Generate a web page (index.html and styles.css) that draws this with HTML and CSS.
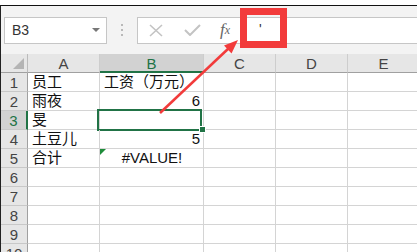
FILE: index.html
```html
<!DOCTYPE html>
<html lang="zh-CN">
<head>
    <meta charset="UTF-8">
    <title>工资表</title>
    <link rel="stylesheet" href="styles.css">
</head>
<body>
    <div class="app">
        <!-- Formula bar -->
        <div class="toolbar">
            <div class="namebox">
                <span>B3</span>
                <span class="caret"></span>
            </div>
            <div class="grip"><i></i><i></i><i></i></div>
            <div class="formula">
                <div class="fbtn">
                    <svg width="14" height="13" viewBox="0 0 14 13"><path d="M1 1 L13 12 M13 1 L1 12" stroke="#c3c3c3" stroke-width="1.6" fill="none"/></svg>
                </div>
                <div class="fbtn">
                    <svg width="17" height="12" viewBox="0 0 17 12"><path d="M1 6 L6 11 L16 1" stroke="#c3c3c3" stroke-width="2" fill="none"/></svg>
                </div>
                <div class="fbtn fx">f<sub>x</sub></div>
                <div class="input">'</div>
            </div>
        </div>

        <!-- Sheet grid -->
        <div class="sheet">
            <div class="hd corner"><span class="tri"></span></div>
            <div class="hd col">A</div>
            <div class="hd col active-col">B</div>
            <div class="hd col">C</div>
            <div class="hd col">D</div>
            <div class="hd col">E</div>

            <div class="hd row">1</div>
            <div class="cell">员工</div>
            <div class="cell">工资（万元）</div>
            <div class="cell"></div><div class="cell"></div><div class="cell"></div>

            <div class="hd row">2</div>
            <div class="cell">雨夜</div>
            <div class="cell num">6</div>
            <div class="cell"></div><div class="cell"></div><div class="cell"></div>

            <div class="hd row active-row">3</div>
            <div class="cell">旻</div>
            <div class="cell selected"><span class="handle"></span></div>
            <div class="cell"></div><div class="cell"></div><div class="cell"></div>

            <div class="hd row">4</div>
            <div class="cell">土豆儿</div>
            <div class="cell num">5</div>
            <div class="cell"></div><div class="cell"></div><div class="cell"></div>

            <div class="hd row">5</div>
            <div class="cell">合计</div>
            <div class="cell err">#VALUE!</div>
            <div class="cell"></div><div class="cell"></div><div class="cell"></div>

            <div class="hd row">6</div>
            <div class="cell"></div><div class="cell"></div><div class="cell"></div><div class="cell"></div><div class="cell"></div>
            <div class="hd row">7</div>
            <div class="cell"></div><div class="cell"></div><div class="cell"></div><div class="cell"></div><div class="cell"></div>
            <div class="hd row">8</div>
            <div class="cell"></div><div class="cell"></div><div class="cell"></div><div class="cell"></div><div class="cell"></div>
            <div class="hd row">9</div>
            <div class="cell"></div><div class="cell"></div><div class="cell"></div><div class="cell"></div><div class="cell"></div>
            <div class="hd row">10</div>
            <div class="cell"></div><div class="cell"></div><div class="cell"></div><div class="cell"></div><div class="cell"></div>
        </div>
    </div>

    <!-- Annotation -->
    <div class="mark"></div>
    <svg class="arrow" width="417" height="252" viewBox="0 0 417 252">
        <line x1="160" y1="113" x2="229" y2="48" stroke="#f23b3b" stroke-width="2.5"/>
        <polygon points="238,40 224,45.5 231.5,53.5" fill="#f23b3b"/>
    </svg>
</body>
</html>
```

FILE: styles.css
```css
body {
    margin: 0;
    background: #fff;
    font-family: "Liberation Sans", "Noto Sans CJK SC", sans-serif;
    color: #222;
    overflow: hidden;
}

.app {
    margin-top: 5px;
    border-top: 1px solid #111;
    border-left: 1px solid #222;
}

/* Formula bar */
.toolbar {
    height: 48px;
    background: #f3f3f3;
    display: flex;
    align-items: center;
    padding-left: 3px;
}

.namebox {
    background: #fff;
    border: 1px solid #c6c6c6;
    display: flex;
    align-items: center;
    justify-content: space-between;
    padding: 0 6px 0 7px;
    box-sizing: border-box;
    width: 103px;
    height: 27px;
    font-size: 14px;
    color: #333;
}

.caret {
    width: 0;
    height: 0;
    border-left: 4px solid transparent;
    border-right: 4px solid transparent;
    border-top: 4px solid #777;
}

.grip {
    width: 30px;
    display: flex;
    flex-direction: column;
    align-items: center;
    gap: 3px;
}

.grip i {
    width: 2px;
    height: 2px;
    background: #b9b9b9;
}

.formula {
    flex: 1;
    height: 27px;
    background: #fff;
    border: 1px solid #c6c6c6;
    border-right: none;
    box-sizing: border-box;
    display: flex;
    align-items: center;
    padding-left: 11px;
}

.fbtn {
    width: 35px;
    display: flex;
    align-items: center;
}

.fx {
    font-family: "Liberation Serif", serif;
    font-style: italic;
    font-size: 17px;
    color: #666;
    width: 26px;
    padding-left: 1px;
}

.fx sub {
    font-size: 12px;
    vertical-align: -1px;
}

.input {
    flex: 1;
    align-self: stretch;
    border-left: 1px solid #c6c6c6;
    padding-left: 12px;
    font-size: 14px;
    line-height: 22px;
    color: #333;
}

/* Sheet */
.sheet {
    display: grid;
    grid-template-columns: 27px 72px 104px 72px 72px 72px;
    grid-auto-rows: 19px;
    font-size: 15px;
}

.hd {
    background: #e6e6e6;
    color: #444;
    display: flex;
    align-items: center;
    justify-content: center;
    box-sizing: border-box;
}

.corner {
    border-right: 1px solid #bbb;
    border-bottom: 1px solid #a0a0a0;
    position: relative;
}

.tri {
    position: absolute;
    right: 3px;
    bottom: 3px;
    width: 11px;
    height: 11px;
    background: #b4b4b4;
    clip-path: polygon(100% 0, 100% 100%, 0 100%);
}

.col {
    border-right: 1px solid #cdcdcd;
    border-bottom: 1px solid #a0a0a0;
    padding-top: 1px;
}

.active-col {
    background: #d2d2d2;
    color: #217346;
    border-bottom: 2px solid #217346;
}

.row {
    border-right: 1px solid #a0a0a0;
    border-bottom: 1px solid #c8c8c8;
}

.active-row {
    background: #d2d2d2;
    color: #217346;
    border-right: 2px solid #217346;
}

.cell {
    border-right: 1px solid #d4d4d4;
    border-bottom: 1px solid #d4d4d4;
    padding: 0 3px 0 4px;
    line-height: 18px;
    color: #111;
    white-space: nowrap;
    position: relative;
}

.num {
    text-align: right;
}

.err {
    text-align: center;
}

.err::before {
    content: "";
    position: absolute;
    left: 0;
    top: 0;
    width: 6px;
    height: 6px;
    background: #1e8c3a;
    clip-path: polygon(0 0, 100% 0, 0 100%);
}

.selected::after {
    content: "";
    position: absolute;
    top: -2px;
    left: -3px;
    right: 1px;
    bottom: -2px;
    border: 2px solid #217346;
}

.handle {
    position: absolute;
    right: -3px;
    bottom: -4px;
    width: 5px;
    height: 5px;
    background: #217346;
    border: 1px solid #fff;
    z-index: 1;
}

/* Red annotation */
.mark {
    position: absolute;
    left: 240px;
    top: 8px;
    width: 33px;
    height: 26px;
    border: 7px solid #f23b3b;
}

.arrow {
    position: absolute;
    left: 0;
    top: 0;
    pointer-events: none;
}
```
